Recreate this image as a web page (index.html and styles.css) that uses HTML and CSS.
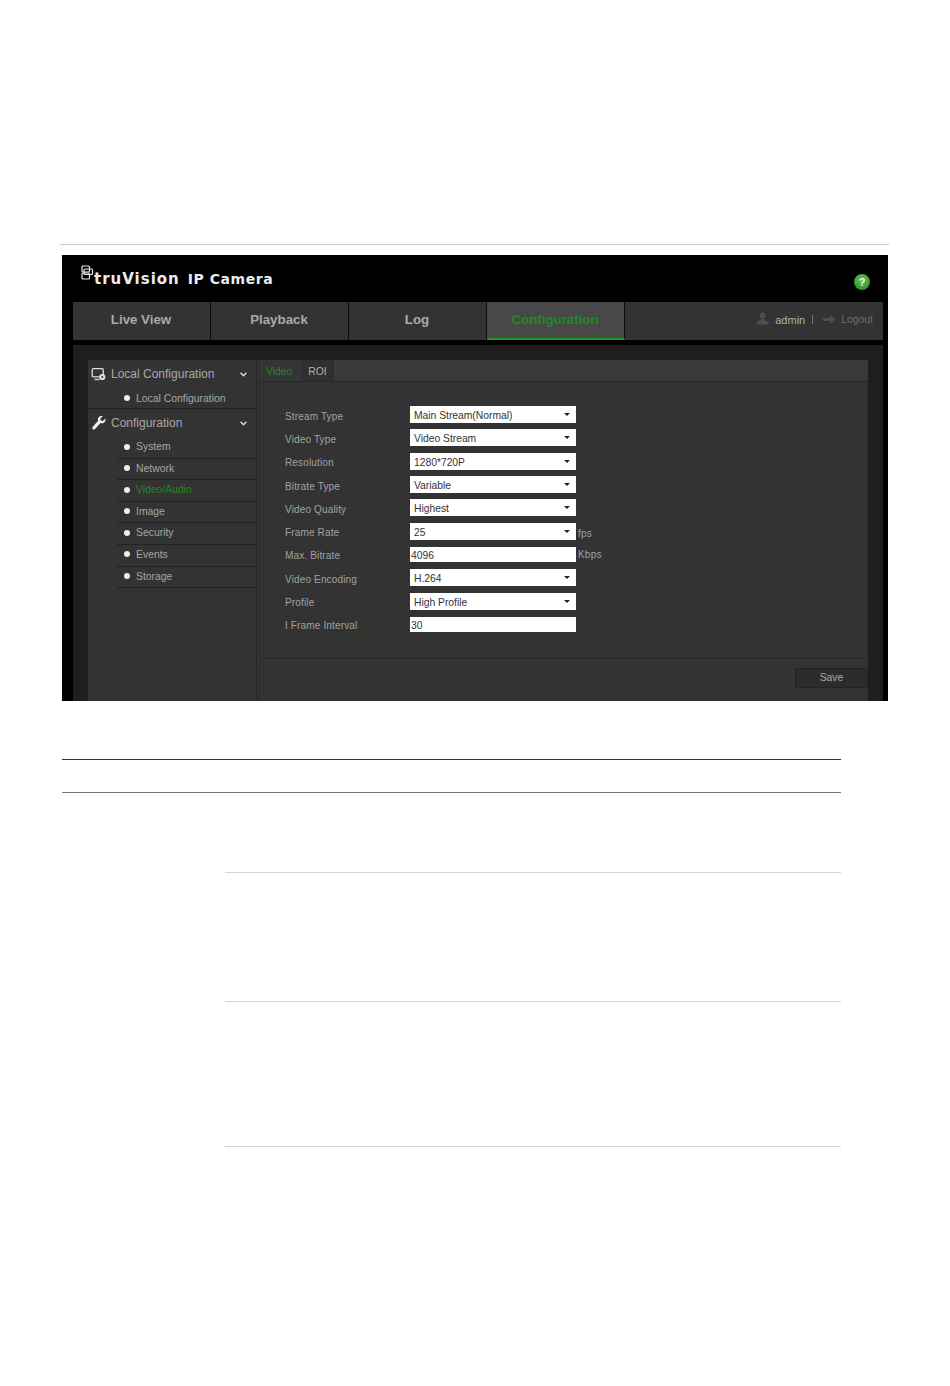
FILE: index.html
```html
<!DOCTYPE html>
<html lang="en">
<head>
<meta charset="utf-8">
<title>truVision IP Camera</title>
<link rel="stylesheet" href="styles.css">
</head>
<body>
<div class="top-rule"></div>
<div class="camera">
  <header class="cam-header">
    <svg class="logo" width="13" height="15" viewBox="0 0 13 15" fill="none" stroke="#e8e8e8" stroke-width="1.2">
      <rect x="1" y="1" width="7.5" height="6" rx="1"/>
      <rect x="3" y="4" width="8.5" height="5.5" rx="1"/>
      <rect x="1" y="8" width="7.5" height="6" rx="1"/>
    </svg>
    <div class="brand"><span class="brand-name">truVision</span><span class="brand-product">IP Camera</span></div>
    <svg class="help" width="16" height="16" viewBox="0 0 16 16">
      <defs><radialGradient id="helpGrad" cx="50%" cy="35%" r="65%"><stop offset="0" stop-color="#6cc05a"/><stop offset="1" stop-color="#2f8f2f"/></radialGradient></defs>
      <circle cx="8" cy="8" r="8" fill="url(#helpGrad)"/>
      <text x="8" y="11.5" text-anchor="middle" class="help-mark">?</text>
    </svg>
  </header>
  <nav class="cam-nav">
    <a class="nav-item">Live View</a>
    <a class="nav-item">Playback</a>
    <a class="nav-item">Log</a>
    <a class="nav-item active">Configuration</a>
    <div class="user">
      <svg width="13" height="13" viewBox="0 0 13 13" fill="#4e4e4e"><circle cx="6.5" cy="3.5" r="3"/><path d="M4.8 6.5h3.4v1.6l4.3 2V12.500H.5v-2.400l4.300-2z"/></svg>
      <span class="admin">admin</span>
      <span class="sep"></span>
      <svg width="13" height="9" viewBox="0 0 13 9" fill="#4e4e4e"><path d="M0 3h7V0l6 4.500L7 9V6H0z"/></svg>
      <span class="logout">Logout</span>
    </div>
  </nav>
  <div class="stage">
    <div class="panel">
      <aside class="sidebar">
        <div class="group-head first">
          <svg class="gicon" width="15" height="13" viewBox="0 0 15 13" fill="none"><rect x=".7" y=".7" width="11" height="8.200" rx="1" stroke="#ddd" stroke-width="1.300"/><path d="M3 11.500h5" stroke="#ddd" stroke-width="1.300"/><circle cx="10.800" cy="9" r="3.100" fill="#ddd"/><circle cx="10.800" cy="9" r="1" fill="#333"/></svg>
          <span class="group-title">Local Configuration</span>
          <svg class="chev" width="7" height="5" viewBox="0 0 7 5" fill="none" stroke="#ddd" stroke-width="1.400"><path d="M.6.8l2.900 2.900L6.400.8"/></svg>
        </div>
        <div class="side-item solo">Local Configuration</div>
        <div class="group-head">
          <svg class="gicon" width="14" height="14" viewBox="0 0 14 14" fill="#eee"><path d="M13.400 2.600l-2.600 2.300-2-.5-.5-1.900L10.800.3c-1.700-.7-3.700 0-4.500 1.500-.6 1-.5 2-.2 3L.8 10.700c-.8 1-.7 1.900 0 2.500.7.600 1.600.5 2.300-.3L8.500 7c1.300.5 2.700.3 3.800-.6 1.100-1 1.500-2.500 1.100-3.800z"/></svg>
          <span class="group-title">Configuration</span>
          <svg class="chev" width="7" height="5" viewBox="0 0 7 5" fill="none" stroke="#ddd" stroke-width="1.400"><path d="M.6.8l2.900 2.900L6.400.8"/></svg>
        </div>
        <div class="side-item">System</div>
        <div class="side-item">Network</div>
        <div class="side-item current">Video/Audio</div>
        <div class="side-item">Image</div>
        <div class="side-item">Security</div>
        <div class="side-item">Events</div>
        <div class="side-item">Storage</div>
      </aside>
      <main class="content">
        <div class="tabs">
          <span class="tab current">Video</span>
          <span class="tab roi">ROI</span>
        </div>
        <div class="form">
          <div class="row"><span class="label">Stream Type</span><div class="select">Main Stream(Normal)</div></div>
          <div class="row"><span class="label">Video Type</span><div class="select">Video Stream</div></div>
          <div class="row"><span class="label">Resolution</span><div class="select">1280*720P</div></div>
          <div class="row"><span class="label">Bitrate Type</span><div class="select">Variable</div></div>
          <div class="row"><span class="label">Video Quality</span><div class="select">Highest</div></div>
          <div class="row"><span class="label">Frame Rate</span><div class="select">25</div><span class="unit low">fps</span></div>
          <div class="row"><span class="label">Max. Bitrate</span><div class="input">4096</div><span class="unit">Kbps</span></div>
          <div class="row"><span class="label">Video Encoding</span><div class="select">H.264</div></div>
          <div class="row"><span class="label">Profile</span><div class="select">High Profile</div></div>
          <div class="row"><span class="label">I Frame Interval</span><div class="input">30</div></div>
        </div>
        <div class="actions"><button class="save">Save</button></div>
      </main>
    </div>
  </div>
</div>
<div class="doc-table">
  <div class="rule head-top"></div>
  <div class="rule head-bottom"></div>
  <div class="row-rule r1"></div>
  <div class="row-rule r2"></div>
  <div class="row-rule r3"></div>
</div>
</body>
</html>
```
FILE: styles.css
```css
* { box-sizing: border-box; }
html, body { margin: 0; padding: 0; background: #fff; }
body { height: 1386px; overflow: hidden; font-family: "Liberation Sans", Arial, sans-serif; }

.top-rule { height: 1px; width: 829px; margin: 244px 0 0 60px; background: #c8c8c8; }

.camera { width: 826px; height: 446px; margin: 10px 0 0 62px; background: #000; overflow: hidden; display: flex; flex-direction: column; }

.cam-header { height: 47px; flex: none; display: flex; align-items: flex-start; padding: 10px 18px 0 19px; }
.logo { flex: none; }
.brand { margin: 5px 0 0 0; color: #ececec; font: bold 14px "DejaVu Sans", sans-serif; white-space: nowrap; display: flex; align-items: baseline; }
.brand-name { font-size: 15px; letter-spacing: 1px; }
.brand-product { margin-left: 8px; letter-spacing: .55px; }
.help { margin: 9px 0 0 auto; flex: none; }
.help-mark { font: bold 11px "Liberation Sans", sans-serif; fill: #e8f5e0; }

.cam-nav { height: 38px; flex: none; margin: 0 5px 0 11px; background: #333; display: flex; align-items: stretch; }
.nav-item { width: 138px; display: flex; align-items: center; justify-content: center; border-right: 1px solid #0c0c0c; color: #aaa; font-weight: bold; font-size: 13.3px; padding: 0 1px 3px 0; }
.nav-item.active { background: #484848; color: #1f8a22; border-bottom: 2px solid #1f9a25; padding-bottom: 1px; }
.user { margin-left: auto; display: flex; align-items: center; padding: 0 10px 3px 0; font-size: 11px; }
.user svg:first-child { margin-bottom: 2px; }
.admin { color: #b0b0b0; margin-left: 6px; }
.sep { width: 1px; height: 9px; background: #777; margin: 0 10px 0 7px; }
.logout { color: #6e6e6e; margin-left: 5px; font-size: 10.4px; }

.stage { flex: 1; min-height: 0; margin: 5px 5px 0 11px; padding: 15px 15px 0; background: #1e1e1e; }
.panel { display: flex; height: 100%; background: #333; }

.sidebar { width: 169px; flex: none; border-right: 1px solid #262626; color: #a6a6a6; font-size: 10.4px; }
.group-head { display: flex; align-items: center; height: 28px; padding: 0 9px 0 3px; font-size: 12px; color: #a8a8a8; }
.group-head.first { height: 27px; padding-top: 1px; }
.gicon { flex: none; width: 16px; }
.group-title { margin-left: 4px; }
.chev { margin-left: auto; flex: none; }
.side-item { position: relative; height: 21.6px; line-height: 20px; margin-left: 29px; padding-left: 19px; border-bottom: 1px solid #222; }
.side-item::before { content: ""; position: absolute; left: 7px; top: 6.500px; width: 6px; height: 6px; border-radius: 50%; background: #eee; }
.side-item.solo { height: 22px; line-height: 23px; margin-left: 0; padding-left: 48px; }
.side-item.solo::before { left: 36px; top: 8px; }
.side-item.current { color: #1f8a22; }

.content { flex: 1; min-width: 0; display: flex; flex-direction: column; margin-left: 2px; border-left: 1px solid #2b2b2b; }
.tabs { height: 22px; flex: none; display: flex; background: #3a3a3a; border-bottom: 1px solid #272727; font-size: 10.4px; }
.tab { display: flex; align-items: center; padding-top: 1px; }
.tab.current { color: #1f8a22; width: 41px; padding-left: 6px; background: #353535; }
.tab.roi { color: #b0b0b0; width: 33px; justify-content: center; background: #2f2f2f; }

.form { flex: none; height: 277px; padding: 21px 0 0 25px; border-bottom: 1px solid #272727; border-right: 1px solid #2b2b2b; }
.row { height: 23.3px; display: flex; align-items: center; }
.label { width: 125px; padding-top: 3px; color: #a2a2a2; font-size: 10px; letter-spacing: .15px; white-space: nowrap; }
.select, .input { width: 166px; background: #fff; color: #333; font-size: 10.3px; white-space: nowrap; }
.select { position: relative; height: 17px; line-height: 19px; padding-left: 4px; }
.select::after { content: ""; position: absolute; right: 6px; top: 7px; border: 3px solid transparent; border-top: 3px solid #222; border-bottom: 0; }
.input { height: 15px; line-height: 17px; padding-left: 1px; }
.unit { margin-left: 2px; color: #a2a2a2; font-size: 10px; letter-spacing: .2px; }
.unit.low { padding-top: 4px; }

.actions { flex: 1; display: flex; justify-content: flex-end; align-items: flex-start; padding: 9px 0 0; }
.save { width: 73px; height: 20px; padding: 0 0 2px; background: #2c2c2c; border: 1px solid #232323; color: #a8a8a8; font: 10.4px "Liberation Sans", sans-serif; }

.doc-table { width: 779px; margin-left: 62px; }
.rule { height: 1px; }
.head-top { margin-top: 58px; background: #333; }
.head-bottom { margin-top: 32px; background: #777; }
.row-rule { height: 1px; margin-left: 163px; background: #d4d4d4; }
.r1 { margin-top: 79px; }
.r2 { margin-top: 128px; }
.r3 { margin-top: 144px; }
```
